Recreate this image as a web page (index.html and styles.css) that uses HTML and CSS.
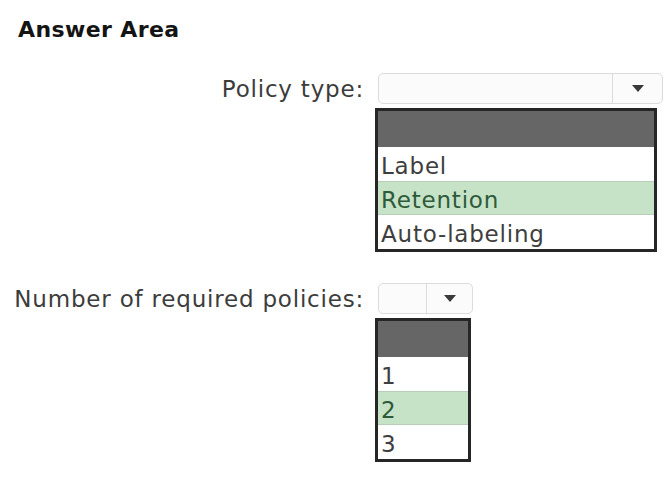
FILE: index.html
```html
<!DOCTYPE html>
<html lang="en">
<head>
<meta charset="utf-8">
<title>Answer Area</title>
<link rel="stylesheet" href="styles.css">
</head>
<body>
<h1 class="title">Answer Area</h1>
<div class="form">
  <div class="row row-policy">
    <div class="lbl">Policy type:</div>
    <div class="field">
      <div class="select select-wide">
        <span class="sel-val"></span>
        <span class="sel-btn sel-btn-wide"><svg class="caret" viewBox="0 0 12 7" width="12" height="7"><path d="M0 0H12L6 7Z"/></svg></span>
      </div>
      <ul class="list list-wide">
        <li class="opt opt-head"></li>
        <li class="opt">Label</li>
        <li class="opt opt-on">Retention</li>
        <li class="opt">Auto-labeling</li>
      </ul>
    </div>
  </div>
  <div class="row row-number">
    <div class="lbl">Number of required policies:</div>
    <div class="field">
      <div class="select select-narrow">
        <span class="sel-val"></span>
        <span class="sel-btn sel-btn-narrow"><svg class="caret" viewBox="0 0 12 7" width="12" height="7"><path d="M0 0H12L6 7Z"/></svg></span>
      </div>
      <ul class="list list-narrow">
        <li class="opt opt-head"></li>
        <li class="opt">1</li>
        <li class="opt opt-on">2</li>
        <li class="opt">3</li>
      </ul>
    </div>
  </div>
</div>
</body>
</html>
```
FILE: styles.css
```css
html, body {
  margin: 0;
  padding: 0;
  background: #ffffff;
}
body {
  font-family: "DejaVu Sans", "Liberation Sans", sans-serif;
  color: #3a3a3a;
  width: 667px;
  height: 477px;
  overflow: hidden;
}
.title {
  margin: 0;
  padding: 16px 0 0 18px;
  font-size: 22px;
  line-height: 28px;
  font-weight: 700;
  color: #141414;
  letter-spacing: 0.4px;
}
.form {
  display: flex;
  flex-direction: column;
  gap: 31px;
  padding-top: 29px;
}
.row {
  display: grid;
  grid-template-columns: 363px auto;
  column-gap: 12px;
  align-items: start;
}
.lbl {
  text-align: right;
  font-size: 23px;
  line-height: 31px;
  padding-top: 1px;
  letter-spacing: 0.8px;
  margin-right: -1px;
  color: #3c3c3c;
  white-space: nowrap;
}
.field {
  display: flex;
  flex-direction: column;
  align-items: flex-start;
  gap: 4px;
}
.select {
  display: flex;
  height: 31px;
  margin-left: 3px;
  box-sizing: border-box;
  border: 1px solid #dcdcdc;
  border-radius: 5px;
  background: #fbfbfb;
}
.select-wide { width: 285px; }
.select-narrow { width: 95px; }
.sel-val { flex: 1; }
.sel-btn {
  display: flex;
  align-items: center;
  justify-content: center;
  border-left: 1px solid #dcdcdc;
}
.sel-btn-wide { width: 49px; }
.sel-btn-narrow { width: 45px; }
.caret { fill: #3a3a3a; }
.list {
  list-style: none;
  margin: 0;
  padding: 0;
  border: 3px solid #262626;
  background: #ffffff;
  box-sizing: border-box;
}
.list-wide { width: 282px; }
.list-narrow { width: 96px; }
.opt {
  height: 34px;
  box-sizing: border-box;
  padding: 4px 0 0 3px;
  line-height: 30px;
  font-size: 23px;
  color: #3e3e3e;
  letter-spacing: 0.8px;
  white-space: nowrap;
}
.opt-head {
  height: 36px;
  padding: 0;
  background: #666666;
}
.opt-on {
  background: #c6e3c8;
  color: #2f5a3a;
  border-top: 1px solid #b9cdbb;
  border-bottom: 1px solid #b9cdbb;
  padding-top: 3px;
}
```
